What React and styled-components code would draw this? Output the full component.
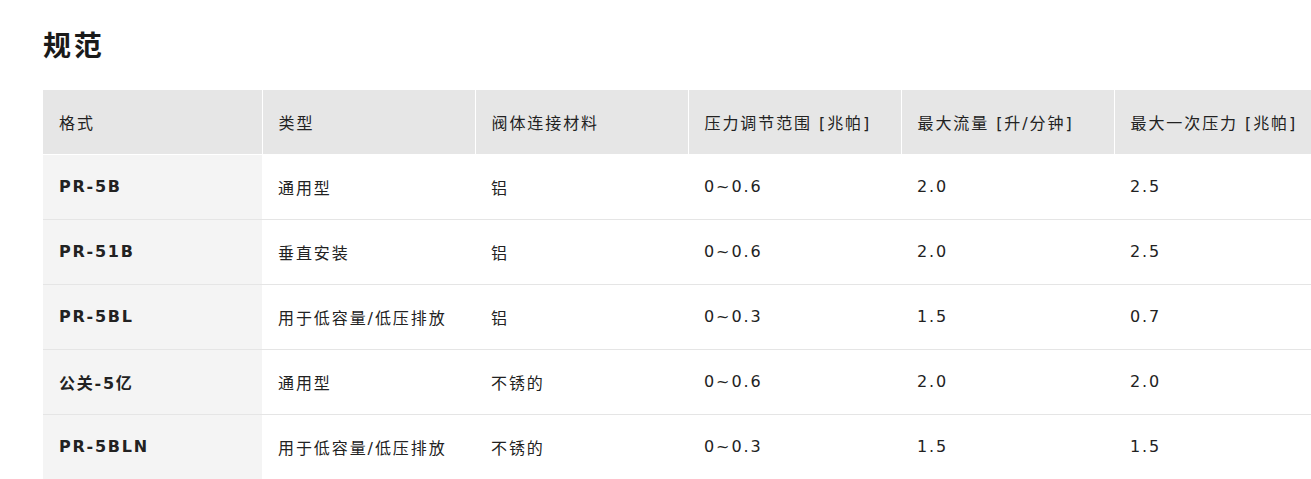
import styled, { createGlobalStyle } from "styled-components";

const GlobalStyle = createGlobalStyle`
  body {
    margin: 0;
    background: #fff;
    overflow: hidden;
    font-family: "DejaVu Sans", "Noto Sans CJK SC", sans-serif;
    color: #222;
  }
`;

const Page = styled.div`
  padding: 23px 0 0 43px;
`;

const Title = styled.h2`
  margin: 0 0 25px;
  font-family: "Noto Sans CJK SC", sans-serif;
  font-size: 28px;
  line-height: 42px;
  font-weight: 700;
  letter-spacing: 0.1em;
  color: #1a1a1a;
`;

const Table = styled.table`
  border-collapse: collapse;
  table-layout: fixed;
  width: 1284px;
  font-size: 16px;
  letter-spacing: 0.12em;
`;

const HeadCell = styled.th`
  width: ${(p) => p.$w}px;
  height: 64px;
  padding: 0 16px;
  box-sizing: border-box;
  background: #e6e6e6;
  border-right: 1px solid #fff;
  border-bottom: 1px solid #fff;
  text-align: left;
  font-weight: 400;
  white-space: nowrap;
  &:last-child { border-right: none; }
`;

const Row = styled.tr`
  border-top: 1px solid #e5e5e5;
  &:first-child { border-top: none; }
`;

const Cell = styled.td`
  height: 65px;
  padding: 0 16px;
  box-sizing: border-box;
  white-space: nowrap;
  background: ${(p) => (p.$model ? "#f4f4f4" : "#fff")};
  font-weight: ${(p) => (p.$model ? 700 : 400)};
  letter-spacing: ${(p) => (p.$model ? "0.11em" : "inherit")};
`;

const columns = [
  { label: "格式", w: 219 },
  { label: "类型", w: 213 },
  { label: "阀体连接材料", w: 213 },
  { label: "压力调节范围 [兆帕]", w: 213 },
  { label: "最大流量 [升/分钟]", w: 213 },
  { label: "最大一次压力 [兆帕]", w: 213 },
];

const rows = [
  ["PR-5B", "通用型", "铝", "0~0.6", "2.0", "2.5"],
  ["PR-51B", "垂直安装", "铝", "0~0.6", "2.0", "2.5"],
  ["PR-5BL", "用于低容量/低压排放", "铝", "0~0.3", "1.5", "0.7"],
  ["公关-5亿", "通用型", "不锈的", "0~0.6", "2.0", "2.0"],
  ["PR-5BLN", "用于低容量/低压排放", "不锈的", "0~0.3", "1.5", "1.5"],
];

export default function App() {
  return (
    <Page>
      <GlobalStyle />
      <Title>规范</Title>
      <Table>
        <thead>
          <tr>
            {columns.map((c) => (
              <HeadCell key={c.label} $w={c.w}>{c.label}</HeadCell>
            ))}
          </tr>
        </thead>
        <tbody>
          {rows.map((r) => (
            <Row key={r[0]}>
              {r.map((v, i) => (
                <Cell key={i} $model={i === 0}>{v}</Cell>
              ))}
            </Row>
          ))}
        </tbody>
      </Table>
    </Page>
  );
}
